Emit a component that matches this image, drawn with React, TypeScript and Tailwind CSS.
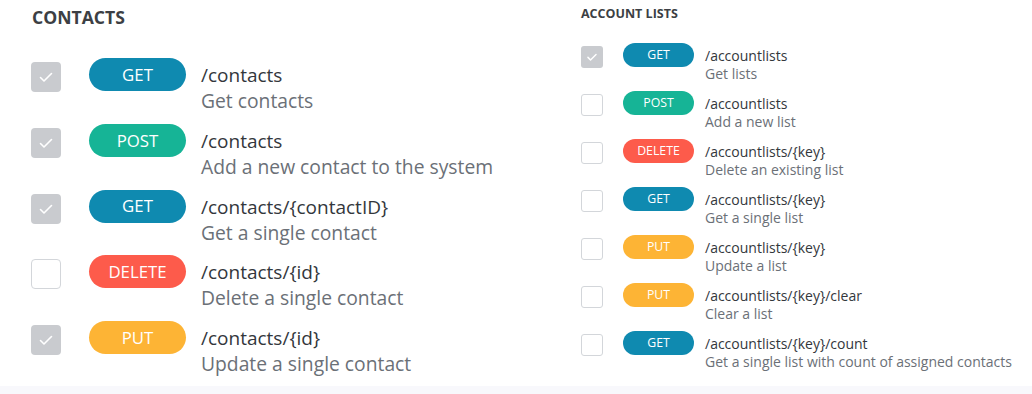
import React from "react";

type Method = "GET" | "POST" | "DELETE" | "PUT";

const badgeColor: Record<Method, string> = {
  GET: "bg-[#0f8ab0]",
  POST: "bg-[#16b496]",
  DELETE: "bg-[#fd5b4b]",
  PUT: "bg-[#fdb435]",
};

const contacts: { m: Method; path: string; desc: string; checked: boolean }[] = [
  { m: "GET", path: "/contacts", desc: "Get contacts", checked: true },
  { m: "POST", path: "/contacts", desc: "Add a new contact to the system", checked: true },
  { m: "GET", path: "/contacts/{contactID}", desc: "Get a single contact", checked: true },
  { m: "DELETE", path: "/contacts/{id}", desc: "Delete a single contact", checked: false },
  { m: "PUT", path: "/contacts/{id}", desc: "Update a single contact", checked: true },
];

const lists: { m: Method; path: string; desc: string; checked: boolean }[] = [
  { m: "GET", path: "/accountlists", desc: "Get lists", checked: true },
  { m: "POST", path: "/accountlists", desc: "Add a new list", checked: false },
  { m: "DELETE", path: "/accountlists/{key}", desc: "Delete an existing list", checked: false },
  { m: "GET", path: "/accountlists/{key}", desc: "Get a single list", checked: false },
  { m: "PUT", path: "/accountlists/{key}", desc: "Update a list", checked: false },
  { m: "PUT", path: "/accountlists/{key}/clear", desc: "Clear a list", checked: false },
  { m: "GET", path: "/accountlists/{key}/count", desc: "Get a single list with count of assigned contacts", checked: false },
];

function Check({ size }: { size: number }) {
  return (
    <svg width={size} height={size} viewBox="0 0 30 30" fill="none">
      <polyline
        points="9.5,15.5 13,19 20.5,11.5"
        stroke="white"
        strokeWidth={size > 25 ? 1.6 : 2}
        strokeLinecap="round"
        strokeLinejoin="round"
      />
    </svg>
  );
}

export default function App() {
  return (
    <div
      className="w-[1032px] h-[394px] flex flex-col bg-white overflow-hidden"
      style={{ fontFamily: '"Open Sans", "Noto Sans", sans-serif' }}
    >
      <div className="flex h-[386px]">
        {/* Contacts */}
        <div className="w-[581px] pl-[31px] pt-[5px]">
          <div className="ml-[1px] text-[17.6px] leading-[24px] font-bold text-[#3c3f44] mb-[29px]">
            CONTACTS
          </div>
          <div className="flex flex-col">
            {contacts.map((r, i) => (
              <div key={i} className="flex items-start h-[65.75px]">
                {r.checked ? (
                  <div className="mt-[4px] w-[30px] h-[30px] rounded-[4px] bg-[#c9cbcf] flex items-center justify-center">
                    <Check size={30} />
                  </div>
                ) : (
                  <div className="mt-[4px] w-[30px] h-[30px] rounded-[4px] bg-white border border-[#d3d6da]" />
                )}
                <div
                  className={`ml-[28px] w-[97px] h-[33px] rounded-full ${badgeColor[r.m]} text-white text-[16.8px] flex items-center justify-center`}
                >
                  {r.m}
                </div>
                <div className="ml-[15px] mt-[4px]">
                  <div className="text-[19px] leading-[26px] text-[#33373c]">{r.path}</div>
                  <div className="text-[19.3px] leading-[25px] text-[#6b7077]">{r.desc}</div>
                </div>
              </div>
            ))}
          </div>
        </div>
        {/* Account lists */}
        <div className="flex-1 pt-[5px]">
          <div className="text-[12.5px] leading-[18px] font-bold text-[#3c3f44] mb-[20px]">
            ACCOUNT LISTS
          </div>
          <div className="flex flex-col">
            {lists.map((r, i) => (
              <div key={i} className="flex items-start h-[48px]">
                {r.checked ? (
                  <div className="mt-[3px] w-[22px] h-[22px] rounded-[3px] bg-[#c9cbcf] flex items-center justify-center">
                    <Check size={22} />
                  </div>
                ) : (
                  <div className="mt-[3px] w-[22px] h-[22px] rounded-[3px] bg-white border border-[#d3d6da]" />
                )}
                <div
                  className={`ml-[20px] w-[71px] h-[24px] rounded-full ${badgeColor[r.m]} text-white text-[12.3px] flex items-center justify-center`}
                >
                  {r.m}
                </div>
                <div className="ml-[11px] mt-[4px]">
                  <div className="text-[14px] leading-[18px] text-[#33373c]">{r.path}</div>
                  <div className="text-[14px] leading-[18px] text-[#6b7077]">{r.desc}</div>
                </div>
              </div>
            ))}
          </div>
        </div>
      </div>
      <div className="flex-1 bg-[#f8f8fc]" />
    </div>
  );
}
